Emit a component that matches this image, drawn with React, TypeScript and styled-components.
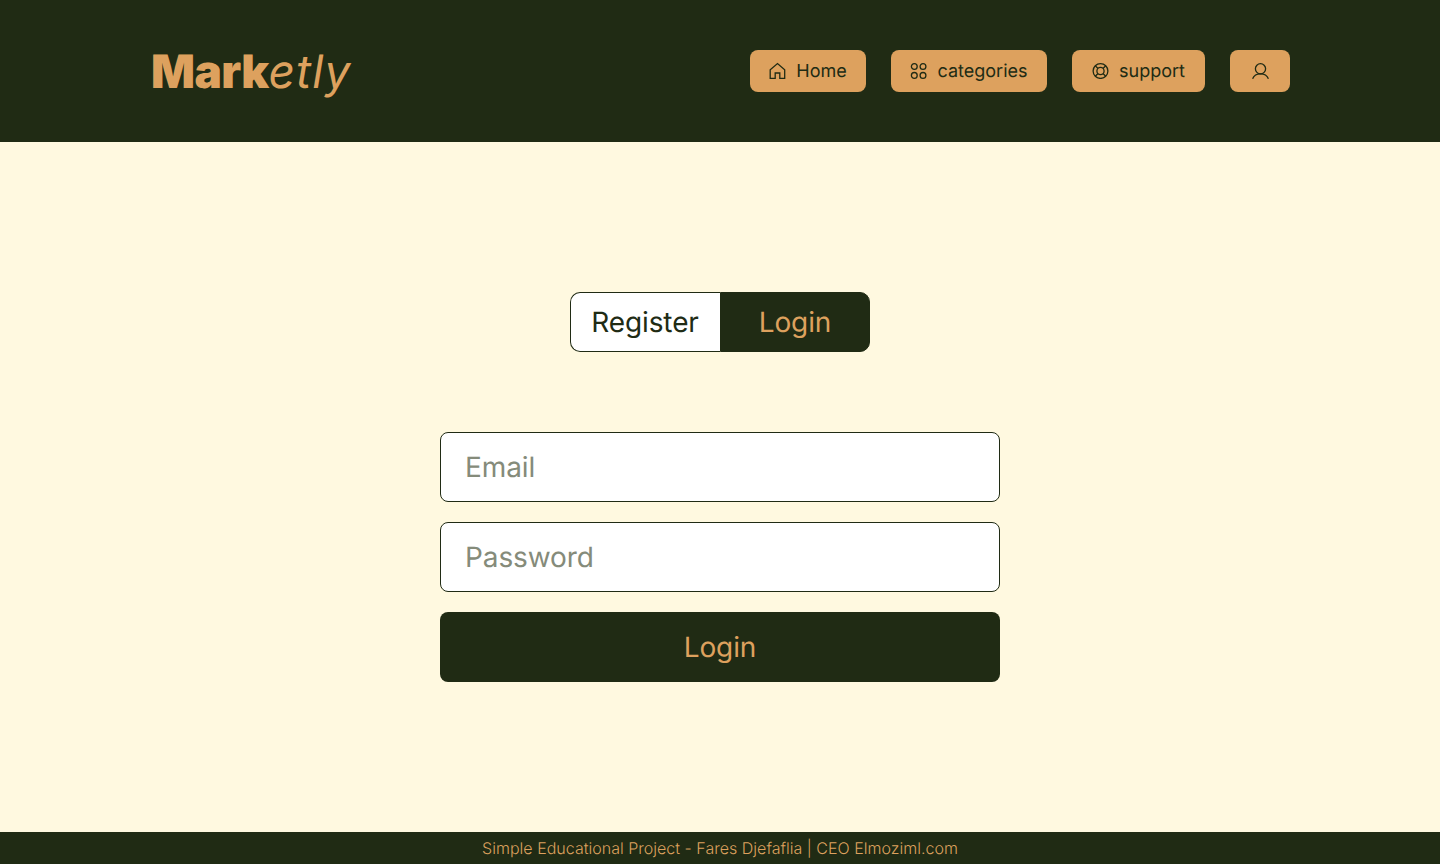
import React from "react";
import styled, { createGlobalStyle } from "styled-components";

const dark = "#202b14";
const accent = "#dda15e";

const GlobalStyle = createGlobalStyle`
  * { box-sizing: border-box; }
  body { margin: 0; background: #fff9e0; font-family: Inter, sans-serif; font-weight: 400; color: ${dark}; text-rendering: geometricPrecision; }
  button, input { font: inherit; text-rendering: inherit; letter-spacing: inherit; }
`;

const Page = styled.div`
  display: flex;
  flex-direction: column;
  height: 864px;
`;

const Header = styled.header`
  display: flex;
  align-items: center;
  justify-content: space-between;
  height: 142px;
  padding: 0 150px;
  background: ${dark};
`;

const Logo = styled.h1`
  margin: 2px 0 0;
  padding-left: 1px;
  font-size: 46px;
  line-height: 56px;
  font-weight: 900;
  letter-spacing: -0.6px;
  color: ${accent};
`;

const LogoTail = styled.em`
  font-weight: 400;
  letter-spacing: 1px;
`;

const Nav = styled.nav`
  display: flex;
  gap: 25px;
`;

const NavButton = styled.button<{ $width: number }>`
  display: flex;
  align-items: center;
  justify-content: center;
  gap: 10px;
  width: ${(p) => p.$width}px;
  height: 42px;
  padding: 0;
  border: 0;
  border-radius: 8px;
  background: ${accent};
  color: ${dark};
  font-size: 18px;
  line-height: 22px;
`;

const Icon = styled.svg`
  display: block;
  flex: none;
  margin-bottom: 1px;
  fill: none;
  stroke: ${dark};
  stroke-width: 1.3;
`;

const Label = styled.span`
  padding-top: 1px;
`;

const Main = styled.main`
  display: flex;
  flex: 1;
  flex-direction: column;
  align-items: center;
  justify-content: center;
  gap: 80px;
`;

const Tabs = styled.div`
  display: flex;
  width: 300px;
  height: 60px;
`;

const Tab = styled.button<{ $active?: boolean }>`
  flex: 1;
  padding: 0 ${(p) => (p.$active ? 0 : 1)}px 0 0;
  border: 1px solid ${dark};
  border-radius: ${(p) => (p.$active ? "0 10px 10px 0" : "10px 0 0 10px")};
  border-right-width: ${(p) => (p.$active ? 1 : 0)}px;
  background: ${(p) => (p.$active ? dark : "#fff")};
  color: ${(p) => (p.$active ? accent : dark)};
  font-size: 28px;
  letter-spacing: -0.1px;
`;

const Form = styled.form`
  display: flex;
  flex-direction: column;
  gap: 20px;
  width: 560px;
`;

const Field = styled.input`
  height: 70px;
  padding: 0 24px;
  border: 1px solid ${dark};
  border-radius: 8px;
  background: #fff;
  font-size: 28px;
  letter-spacing: -0.1px;
  &::placeholder { color: #858b7a; opacity: 1; }
`;

const Submit = styled.button`
  height: 70px;
  border: 0;
  border-radius: 8px;
  background: ${dark};
  color: ${accent};
  font-size: 28px;
  letter-spacing: -0.1px;
`;

const Footer = styled.footer`
  display: flex;
  align-items: center;
  justify-content: center;
  height: 32px;
  background: ${dark};
  color: ${accent};
  font-size: 16px;
  font-weight: 300;
  letter-spacing: 0.015px;
`;

export default function App() {
  return (
    <Page>
      <GlobalStyle />
      <Header>
        <Logo>Mark<LogoTail>etly</LogoTail></Logo>
        <Nav>
          <NavButton $width={116}>
            <Icon width="17" height="17" viewBox="0 0 17 17">
              <path d="M1.200 16.300V7.700L8.500 1.500l7.200 6.200v8.600h-4.900v-5.300H6.200v5.300Z" />
            </Icon>
            <Label>Home</Label>
          </NavButton>
          <NavButton $width={156}>
            <Icon width="17" height="17" viewBox="0 0 17 17">
              <circle cx="4.300" cy="4.500" r="2.900" />
              <circle cx="13" cy="4.500" r="2.900" />
              <circle cx="4.300" cy="13.400" r="2.900" />
              <circle cx="13" cy="13.400" r="2.900" />
            </Icon>
            <Label>categories</Label>
          </NavButton>
          <NavButton $width={133}>
            <Icon width="17" height="17" viewBox="0 0 17 17">
              <circle cx="8.500" cy="9" r="7.400" />
              <circle cx="8.500" cy="9" r="3.600" />
              <path d="m3.300 3.800 2.700 2.700m5 5 2.700 2.700m0-10.400-2.700 2.700m-5 5-2.700 2.700" />
            </Icon>
            <Label>support</Label>
          </NavButton>
          <NavButton $width={60} aria-label="Account">
            <Icon width="17" height="17" viewBox="0 0 17 17">
              <circle cx="8.500" cy="6.800" r="5.100" />
              <path d="M.6 16.800c1.200-3 4.300-4.900 7.900-4.900s6.700 1.900 7.900 4.900" />
            </Icon>
          </NavButton>
        </Nav>
      </Header>
      <Main>
        <Tabs>
          <Tab type="button">Register</Tab>
          <Tab type="button" $active>Login</Tab>
        </Tabs>
        <Form>
          <Field type="email" placeholder="Email" />
          <Field type="password" placeholder="Password" />
          <Submit type="button">Login</Submit>
        </Form>
      </Main>
      <Footer>Simple Educational Project - Fares Djefaflia | CEO Elmoziml.com</Footer>
    </Page>
  );
}
